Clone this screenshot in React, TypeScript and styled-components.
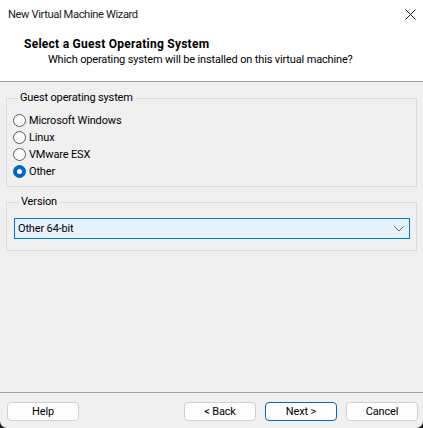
import React, { useState } from "react";
import styled, { createGlobalStyle } from "styled-components";

const Global = createGlobalStyle`
  html, body { margin: 0; padding: 0; background: #1c1c1c; }
  #root { width: 423px; height: 428px; }
  * { box-sizing: border-box; }
`;

const FONT = `"Segoe UI", Roboto, "Liberation Sans", sans-serif`;
const SIZE = "11px";
const SPACING = "-0.15px";

const Window = styled.div`
  width: 423px;
  height: 428px;
  display: flex;
  flex-direction: column;
  background: #f0f0f0;
  font-family: ${FONT};
  font-size: ${SIZE};
  letter-spacing: ${SPACING};
  color: #000;
  border-radius: 0 0 7px 7px;
  overflow: hidden;
`;

const TitleBar = styled.div`
  height: 30px;
  background: #fff;
  display: flex;
  align-items: center;
  justify-content: space-between;
  padding: 0 7px 1px 8px;
`;

const Title = styled.div`
  font-size: 11.2px;
  letter-spacing: -0.4px;
  color: #1a1a1a;
`;

const CloseBtn = styled.div`
  width: 12px;
  height: 12px;
  display: flex;
  align-items: center;
  justify-content: center;
`;

const Header = styled.div`
  height: 52px;
  background: #fff;
  border-bottom: 1px solid #a0a0a0;
  padding: 6px 0 0 24px;
  display: flex;
  flex-direction: column;
`;

const Heading = styled.div`
  font-weight: 700;
  font-size: 12px;
  letter-spacing: 0.26px;
  line-height: 16px;
`;

const SubHeading = styled.div`
  line-height: 16px;
  padding-left: 24px;
`;

const Content = styled.div`
  flex: 1;
  padding: 8px 6px 0 6px;
  display: flex;
  flex-direction: column;
  gap: 7px;
`;

const Group = styled.fieldset<{ $pt: number; $pb: number; $pl: number }>`
  margin: 0;
  border: 1px solid #dcdcdc;
  padding: ${(p) => p.$pt}px 6px ${(p) => p.$pb}px ${(p) => p.$pl}px;
  min-width: 0;
`;

const Legend = styled.legend`
  padding: 0 2px;
  margin-left: 5px;
  line-height: 16px;
`;

const RadioRow = styled.label`
  height: 17px;
  display: flex;
  align-items: center;
  gap: 3px;
  cursor: default;
`;

const RadioCircle = styled.span<{ $on: boolean }>`
  width: 13px;
  height: 13px;
  border-radius: 50%;
  flex: none;
  border: 1px solid ${(p) => (p.$on ? "#0067c0" : "#5c5c5c")};
  background: ${(p) => (p.$on ? "#0067c0" : "#fbfbfb")};
  display: flex;
  align-items: center;
  justify-content: center;
  &::after {
    content: "";
    width: 5px;
    height: 5px;
    border-radius: 50%;
    background: #fff;
    display: ${(p) => (p.$on ? "block" : "none")};
  }
`;

const Select = styled.div`
  height: 21px;
  border: 1px solid #0078d4;
  background: #e5f1fb;
  display: flex;
  align-items: center;
  justify-content: space-between;
  padding: 0 5px 0 3px;
`;

const Footer = styled.div`
  height: 36px;
  border-top: 1px solid #a0a0a0;
  display: flex;
  align-items: flex-start;
  padding: 9px 5px 0 7px;
`;

const Button = styled.button<{ $primary?: boolean }>`
  width: 72px;
  height: 19px;
  font-family: ${FONT};
  font-size: ${SIZE};
  letter-spacing: ${SPACING};
  color: #000;
  background: #fdfdfd;
  border: 1px solid ${(p) => (p.$primary ? "#0067c0" : "#d0d0d0")};
  border-radius: 4px;
  padding: 0;
  line-height: 16px;
  & + & {
    margin-left: 9px;
  }
`;

const Spacer = styled.div`
  flex: 1;
`;

const options = ["Microsoft Windows", "Linux", "VMware ESX", "Other"];

export default function App() {
  const [sel, setSel] = useState("Other");
  return (
    <>
      <Global />
      <Window>
        <TitleBar>
          <Title>New Virtual Machine Wizard</Title>
          <CloseBtn>
            <svg width="11" height="11" viewBox="0 0 11 11">
              <path d="M0.5 0.5 L10.5 10.5 M10.5 0.5 L0.5 10.5" stroke="#1a1a1a" strokeWidth="1" />
            </svg>
          </CloseBtn>
        </TitleBar>
        <Header>
          <Heading>Select a Guest Operating System</Heading>
          <SubHeading>Which operating system will be installed on this virtual machine?</SubHeading>
        </Header>
        <Content>
          <Group $pt={6} $pb={6} $pl={6}>
            <Legend>Guest operating system</Legend>
            {options.map((o) => (
              <RadioRow key={o} onClick={() => setSel(o)}>
                <RadioCircle $on={sel === o} />
                {o}
              </RadioRow>
            ))}
          </Group>
          <Group $pt={8} $pb={11} $pl={7}>
            <Legend>Version</Legend>
            <Select>
              <span>Other 64-bit</span>
              <svg width="10" height="6" viewBox="0 0 10 6">
                <path d="M0.5 0.5 L5 5 L9.5 0.5" stroke="#606060" strokeWidth="1" fill="none" />
              </svg>
            </Select>
          </Group>
        </Content>
        <Footer>
          <Button>Help</Button>
          <Spacer />
          <Button>&lt; Back</Button>
          <Button $primary>Next &gt;</Button>
          <Button>Cancel</Button>
        </Footer>
      </Window>
    </>
  );
}
